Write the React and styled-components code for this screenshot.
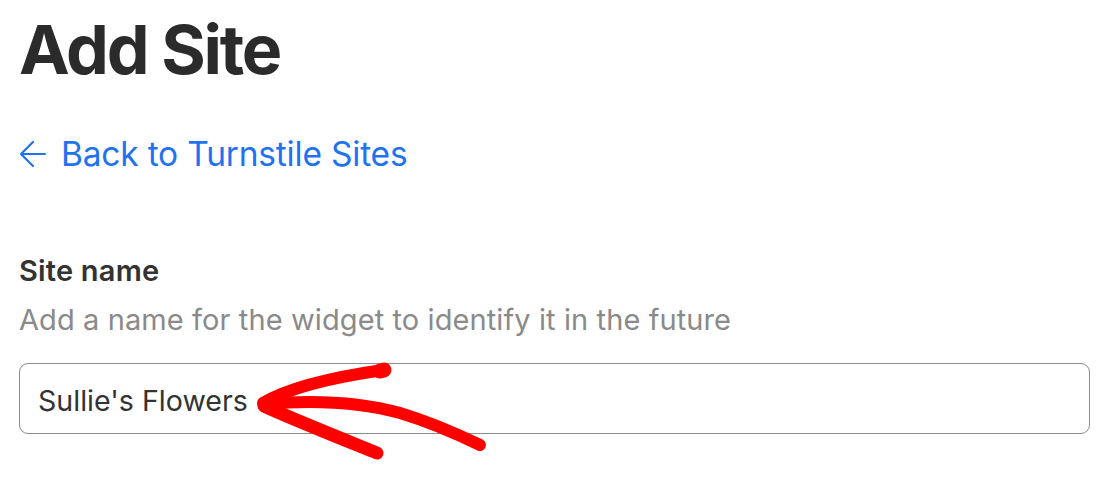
import React from "react";
import styled, { createGlobalStyle } from "styled-components";

const GlobalStyle = createGlobalStyle`
  html, body {
    margin: 0;
    padding: 0;
    background: #fff;
  }
  body {
    font-family: Inter, "Noto Sans", "Liberation Sans", sans-serif;
  }
`;

const Page = styled.div`
  position: relative;
  width: 1116px;
  height: 499px;
  overflow: hidden;
  box-sizing: border-box;
  padding: 14px 27px 0 19px;
  display: flex;
  flex-direction: column;
`;

const Title = styled.h1`
  margin: 0;
  font-size: 68px;
  line-height: 70px;
  font-weight: 700;
  color: #2b2b2b;
  letter-spacing: -2.2px;
`;

const BackLink = styled.a`
  margin-top: 53px;
  display: flex;
  align-items: center;
  gap: 14px;
  font-size: 33.5px;
  line-height: 34px;
  color: #1f72f0;
  text-decoration: none;
  letter-spacing: -0.2px;
`;

const Field = styled.div`
  margin-top: 85px;
  display: flex;
  flex-direction: column;
`;

const Label = styled.label`
  font-size: 29px;
  line-height: 29px;
  font-weight: 600;
  color: #333;
  letter-spacing: 0.2px;
`;

const Hint = styled.p`
  margin: 20px 0 0;
  font-size: 29px;
  line-height: 29px;
  color: #8a8a8a;
  letter-spacing: 0.1px;
`;

const TextInput = styled.input`
  margin-top: 29px;
  box-sizing: border-box;
  width: 1071px;
  height: 71px;
  padding: 4px 18px 0;
  border: 1.5px solid #8c8c8c;
  border-radius: 9px;
  font-family: inherit;
  font-size: 28.6px;
  color: #333;
  background: #fff;
  outline: none;
`;

const Annotation = styled.svg`
  position: absolute;
  left: 0;
  top: 0;
  pointer-events: none;
`;

function BackArrow() {
  return (
    <svg width="28" height="28" viewBox="0 0 28 28" fill="none">
      <path
        d="M26 14H2M14 2L2 14l12 12"
        stroke="currentColor"
        strokeWidth="2.2"
        strokeLinecap="round"
        strokeLinejoin="round"
      />
    </svg>
  );
}

export default function App() {
  return (
    <>
      <GlobalStyle />
      <Page>
        <Title>Add Site</Title>
        <BackLink href="#">
          <BackArrow />
          Back to Turnstile Sites
        </BackLink>
        <Field>
          <Label htmlFor="site-name">Site name</Label>
          <Hint>Add a name for the widget to identify it in the future</Hint>
          <TextInput id="site-name" defaultValue="Sullie's Flowers" readOnly />
        </Field>
        <Annotation width="1116" height="499" viewBox="0 0 1116 499">
          <g fill="none" stroke="#ff0000" strokeLinecap="round" strokeLinejoin="round">
            <path d="M263 403 C 285 390, 320 379, 383 370" strokeWidth="12" />
            <path d="M380 371 L 384 370" strokeWidth="15" />
            <path d="M264 404 C 310 400, 360 402, 400 413 C 430 422, 455 433, 480 445" strokeWidth="12" />
            <path d="M264 406 C 290 418, 325 432, 377 453" strokeWidth="13" />
          </g>
        </Annotation>
      </Page>
    </>
  );
}
